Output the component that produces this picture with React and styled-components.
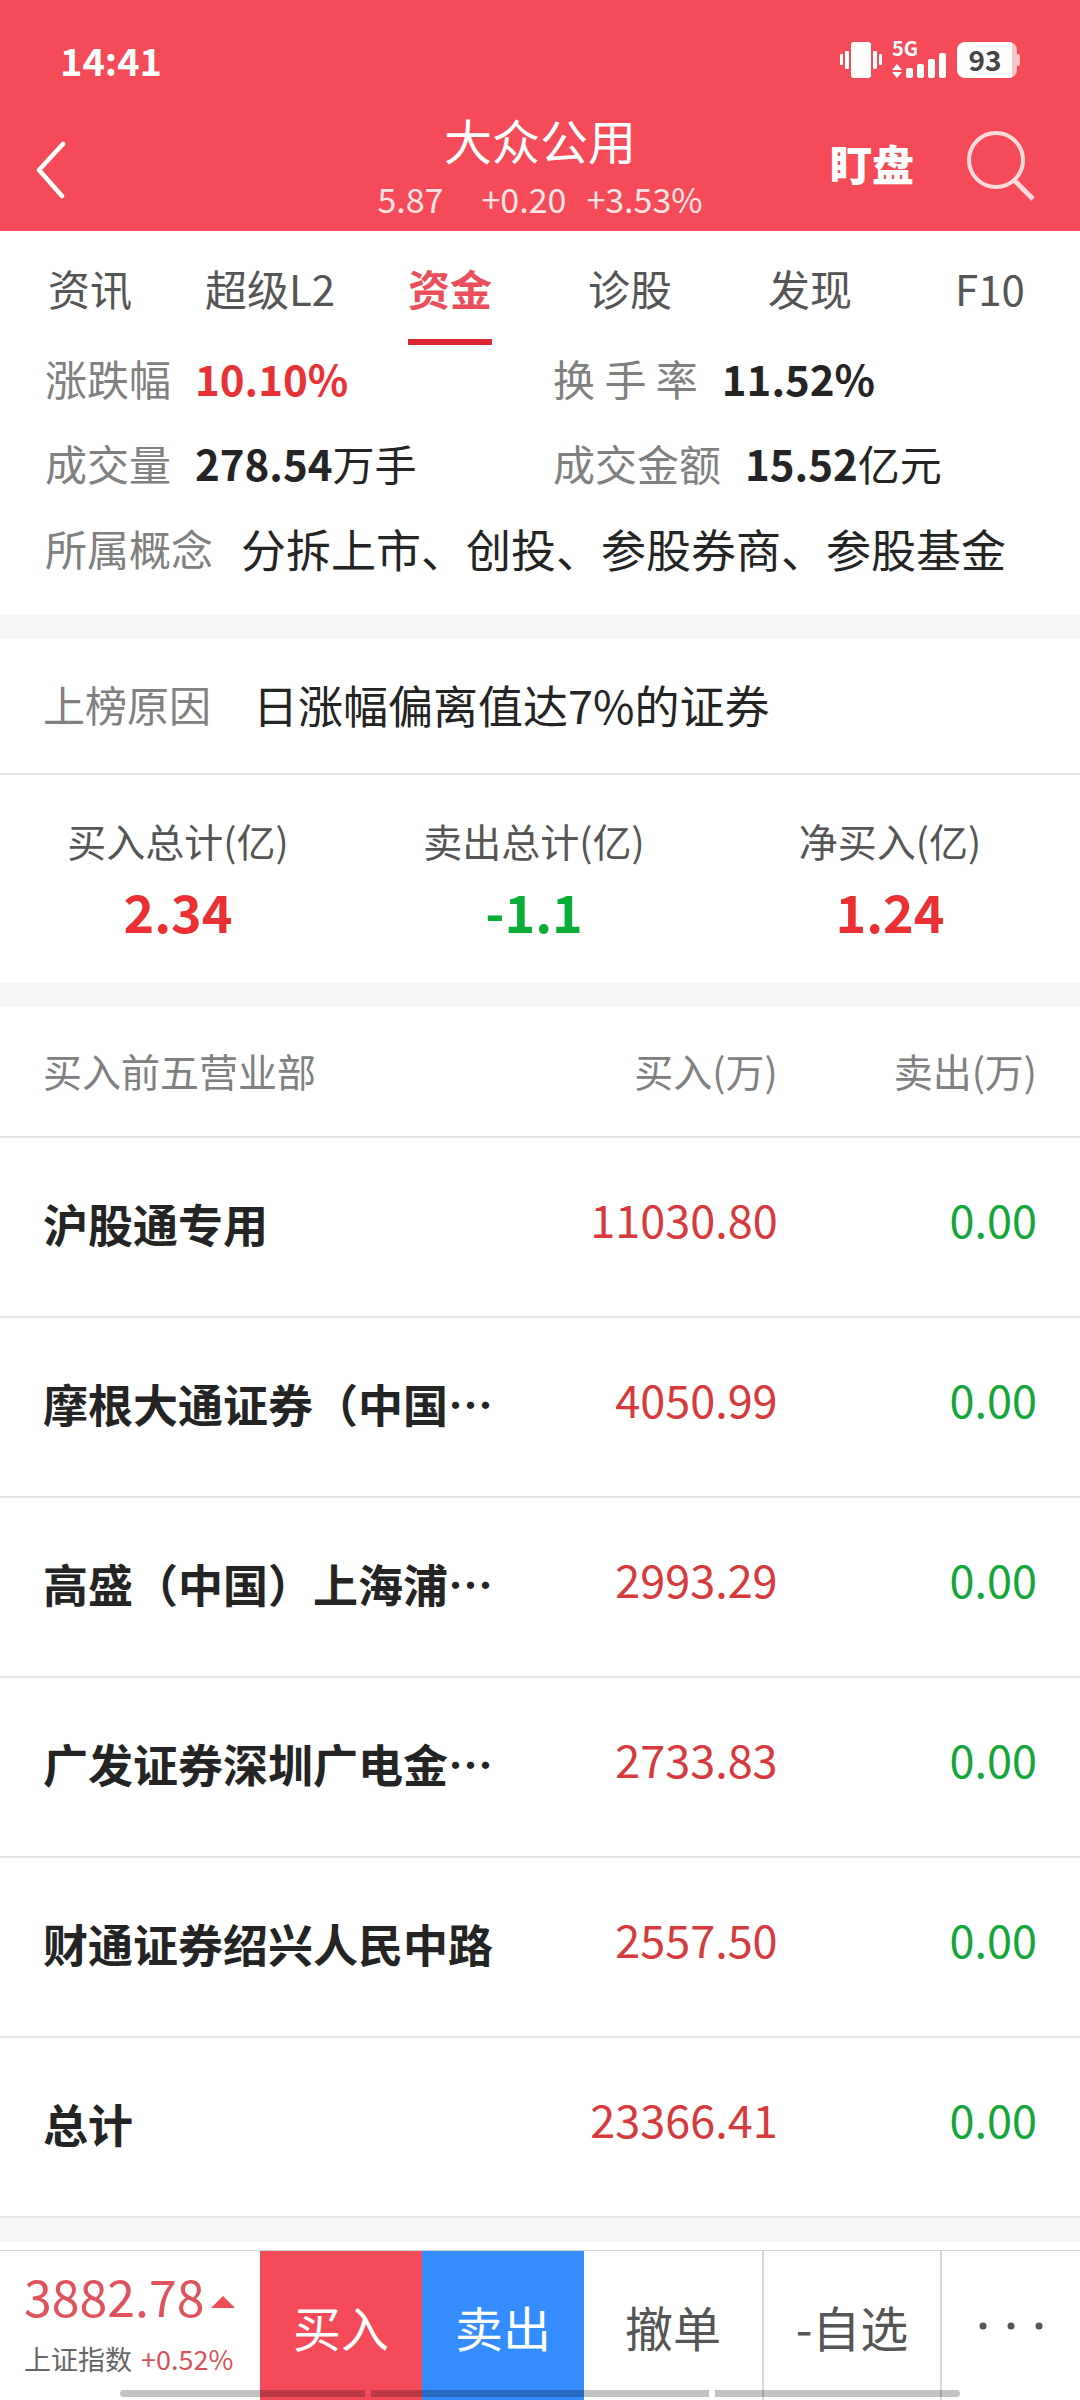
import React from 'react'
import styled, { createGlobalStyle } from 'styled-components'

const tabs = ['资讯', '超级L2', '资金', '诊股', '发现', 'F10']

const totals = [
  { label: '买入总计(亿)', value: '2.34' },
  { label: '卖出总计(亿)', value: '-1.1', down: true },
  { label: '净买入(亿)', value: '1.24' }
]

const seats = [
  { name: '沪股通专用', buy: '11030.80', sell: '0.00' },
  { name: '摩根大通证券（中国…', buy: '4050.99', sell: '0.00' },
  { name: '高盛（中国）上海浦…', buy: '2993.29', sell: '0.00' },
  { name: '广发证券深圳广电金…', buy: '2733.83', sell: '0.00' },
  { name: '财通证券绍兴人民中路', buy: '2557.50', sell: '0.00' },
  { name: '总计', buy: '23366.41', sell: '0.00' }
]

const VibrateIcon = () => (
  <svg width="42" height="36" viewBox="0 0 42 36" fill="#fff">
    <rect x="0" y="12" width="3" height="11" rx="1" />
    <rect x="5" y="9" width="4" height="18" rx="1" />
    <rect x="11" y="0" width="20" height="36" rx="3" />
    <rect x="33" y="9" width="4" height="18" rx="1" />
    <rect x="39" y="12" width="3" height="11" rx="1" />
  </svg>
)

const SignalIcon = () => (
  <svg width="55" height="36" viewBox="0 0 55 36" fill="#fff">
    <path d="M5 22L10 28H0zM0 30H10L5 36z" />
    <rect x="14" y="26" width="7" height="10" rx="2" />
    <rect x="25" y="22" width="7" height="14" rx="2" />
    <rect x="36" y="17" width="7" height="19" rx="2" />
    <rect x="47" y="11" width="7" height="25" rx="2" />
  </svg>
)

const BackIcon = () => (
  <svg width="30" height="58" viewBox="0 0 30 58" fill="none" stroke="#fff" strokeWidth="4.500" strokeLinecap="round" strokeLinejoin="round">
    <path d="M27 3L3 29L26 55" />
  </svg>
)

const SearchIcon = () => (
  <svg width="70" height="70" viewBox="0 0 70 70" fill="none" stroke="#ffdadd" strokeWidth="4">
    <circle cx="30" cy="29" r="27" />
    <path d="M48 49L67 68" strokeWidth="5" />
  </svg>
)

const App = () => (
  <Page>
    <GlobalStyle />
    <Header>
      <StatusBar>
        <Time>14:41</Time>
        <StatusIcons>
          <VibrateIcon />
          <Signal>
            <SignalIcon />
            <Network>5G</Network>
          </Signal>
          <Battery>93</Battery>
        </StatusIcons>
      </StatusBar>
      <TitleBar>
        <Back aria-label="返回"><BackIcon /></Back>
        <Heading>
          <Title>大众公用</Title>
          <Quote>
            <span>5.87</span>
            <Change>
              <span>+0.20</span>
              <span>+3.53%</span>
            </Change>
          </Quote>
        </Heading>
        <Actions>
          <Watch>盯盘</Watch>
          <button aria-label="搜索"><SearchIcon /></button>
        </Actions>
      </TitleBar>
    </Header>
    <Tabs>
      {
        tabs.map(tab => (
          <Tab key={tab} $active={tab === '资金'}>
            <TabText $active={tab === '资金'}>{tab}</TabText>
          </Tab>
        ))
      }
    </Tabs>
    <Facts>
      <Fact>
        <Label>涨跌幅</Label>
        <Value $color="#e73236"><b>10.10%</b></Value>
      </Fact>
      <Fact>
        <Label>换 手 率</Label>
        <Value><b>11.52%</b></Value>
      </Fact>
      <Fact>
        <Label>成交量</Label>
        <Value><b>278.54</b>万手</Value>
      </Fact>
      <Fact>
        <Label>成交金额</Label>
        <Value><b>15.52</b>亿元</Value>
      </Fact>
      <Fact $wide>
        <Label>所属概念</Label>
        <LongValue>分拆上市、创投、参股券商、参股基金</LongValue>
      </Fact>
    </Facts>
    <Band />
    <Reason>
      <Label>上榜原因</Label>
      <LongValue>日涨幅偏离值达7%的证券</LongValue>
    </Reason>
    <Totals>
      {
        totals.map(({ label, value, down }) => (
          <Total key={label}>
            <TotalLabel>{label}</TotalLabel>
            <TotalValue $down={down}>{value}</TotalValue>
          </Total>
        ))
      }
    </Totals>
    <Band />
    <Table>
      <thead>
        <tr>
          <Th>买入前五营业部</Th>
          <Th>买入(万)</Th>
          <Th>卖出(万)</Th>
        </tr>
      </thead>
      <tbody>
        {
          seats.map(({ name, buy, sell }) => (
            <tr key={name}>
              <Name>{name}</Name>
              <Amount>{buy}</Amount>
              <Amount $down>{sell}</Amount>
            </tr>
          ))
        }
      </tbody>
    </Table>
    <Band />
    <BottomBar>
      <Index>
        <Points>
          3882.78
          <Rise width="24" height="12" viewBox="0 0 24 12"><path d="M12 0L24 12H0z" /></Rise>
        </Points>
        <IndexRow>
          上证指数
          <IndexChange>+0.52%</IndexChange>
        </IndexRow>
      </Index>
      <Trade $color="#f54b58">买入</Trade>
      <Trade $color="#348cff">卖出</Trade>
      <Action>撤单</Action>
      <Action>-自选</Action>
      <More aria-label="更多">
        <svg width="64" height="8" viewBox="0 0 64 8" fill="#555">
          <circle cx="4" cy="4" r="3.500" />
          <circle cx="32" cy="4" r="3.500" />
          <circle cx="60" cy="4" r="3.500" />
        </svg>
      </More>
      <Gesture>
        <Pill $grow={245} $side="left" />
        <Pill $grow={338} />
        <Pill $grow={245} $side="right" />
      </Gesture>
    </BottomBar>
  </Page>
)

const GlobalStyle = createGlobalStyle`
  * {
    box-sizing: border-box;
  }
  body {
    margin: 0;
    background: #fff;
    color: #242424;
    font-family: "Noto Sans CJK SC", sans-serif;
  }
  button {
    border: 0;
    padding: 0;
    background: none;
    color: inherit;
    font: inherit;
  }
  svg {
    display: block;
  }
`

const Page = styled.main`
  display: flex;
  flex-direction: column;
  min-height: 100vh;
`

const Header = styled.header`
  background: #f54b58;
  color: #fff;
`

const StatusBar = styled.div`
  display: flex;
  justify-content: space-between;
  align-items: center;
  padding: 42px 63px 0 60px;
`

const Time = styled.span`
  font-size: 38px;
  line-height: 36px;
  font-weight: 700;
`

const StatusIcons = styled.div`
  display: flex;
  gap: 10px;
`

const Signal = styled.div`
  position: relative;
`

const Network = styled.span`
  position: absolute;
  top: 0;
  left: 0;
  font-size: 20px;
  line-height: 12px;
  font-weight: 700;
`

const Battery = styled.div`
  position: relative;
  width: 60px;
  border-radius: 8px;
  padding-right: 4px;
  background: linear-gradient(90deg, #fff 55px, #fbc3c7 55px);
  color: #444;
  font-size: 28px;
  line-height: 34px;
  font-weight: 700;
  text-align: center;
  &::after {
    content: '';
    position: absolute;
    top: 12px;
    right: -3px;
    width: 3px;
    height: 12px;
    border-radius: 0 2px 2px 0;
    background: #fbc3c7;
  }
`

const TitleBar = styled.div`
  display: grid;
  grid-template-columns: 1fr auto 1fr;
  align-items: center;
  padding: 28px 36px 5px;
`

const Back = styled.button`
  justify-self: start;
  padding-top: 8px;
`

const Heading = styled.div`
  text-align: center;
`

const Title = styled.h1`
  margin: 0;
  font-size: 48px;
  line-height: 66px;
  font-weight: 400;
`

const Quote = styled.div`
  display: flex;
  gap: 38px;
  color: #ffe4e6;
  font-size: 34px;
  line-height: 54px;
`

const Change = styled.span`
  display: flex;
  gap: 20px;
`

const Actions = styled.div`
  display: flex;
  justify-content: flex-end;
  align-items: center;
  gap: 52px;
  padding-right: 8px;
`

const Watch = styled.button`
  padding-bottom: 6px;
  font-size: 42px;
  line-height: 64px;
  font-weight: 900;
`

const Tabs = styled.nav`
  display: grid;
  grid-template-columns: repeat(6, 1fr);
`

const Tab = styled.button`
  display: flex;
  justify-content: center;
  color: ${({ $active }) => $active ? '#e9505b' : '#555'};
  font-size: 42px;
  font-weight: ${({ $active }) => $active ? 700 : 400};
`

const TabText = styled.span`
  padding-top: 6px;
  border-bottom: 6px solid ${({ $active }) => $active ? '#dc2730' : 'transparent'};
  line-height: 102px;
`

const Facts = styled.section`
  display: grid;
  grid-template-columns: 508fr 482fr;
  row-gap: 17px;
  padding: 0 45px 32px;
`

const Fact = styled.div`
  display: flex;
  align-items: center;
  gap: 24px;
  line-height: 68px;
  ${({ $wide }) => $wide && 'grid-column: 1 / -1; gap: 28px;'}
`

const Label = styled.span`
  padding-bottom: 2px;
  color: #808080;
  font-size: 42px;
  line-height: 66px;
`

const Value = styled.span`
  padding-bottom: 2px;
  color: ${({ $color }) => $color || '#242424'};
  font-size: 42px;
  line-height: 66px;
`

const LongValue = styled.span`
  font-size: 45px;
`

const Band = styled.div`
  height: 24px;
  background: #f6f6f6;
`

const Reason = styled.section`
  display: flex;
  align-items: center;
  gap: 42px;
  padding: 31px 43px 33px;
  border-bottom: 2px solid #e4e4e4;
  line-height: 70px;
`

const Totals = styled.section`
  display: grid;
  grid-template-columns: repeat(3, 1fr);
  padding: 32px 12px 34px 0;
`

const Total = styled.div`
  text-align: center;
`

const TotalLabel = styled.div`
  color: #555;
  font-size: 39px;
  line-height: 66px;
`

const TotalValue = styled.div`
  color: ${({ $down }) => $down ? '#0aae36' : '#eb3033'};
  font-size: 52px;
  line-height: 76px;
  font-weight: 700;
`

const Table = styled.table`
  width: 100%;
  border-spacing: 0;
  table-layout: fixed;
  & tr > * {
    padding: 0 0 8px 43px;
    border-bottom: 2px solid #e4e4e4;
    text-align: left;
    white-space: nowrap;
  }
  & tr > :nth-child(2) {
    width: 24%;
    padding: 0 0 18px;
    text-align: right;
  }
  & tr > :nth-child(3) {
    width: 28%;
    padding: 0 43px 18px 0;
    text-align: right;
  }
  & thead tr > :nth-child(n) {
    padding-bottom: 3px;
  }
`

const Th = styled.th`
  height: 131px;
  color: #808080;
  font-size: 39px;
  font-weight: 400;
`

const Name = styled.td`
  height: 180px;
  font-size: 45px;
  font-weight: 700;
`

const Amount = styled.td`
  height: 180px;
  color: ${({ $down }) => $down ? '#14a53c' : '#d63a3d'};
  font-size: 45px;
`

const BottomBar = styled.footer`
  position: relative;
  display: grid;
  grid-template-columns: 260fr 162fr 162fr 180fr 178fr 138fr;
  min-height: 150px;
  margin-top: auto;
  border-top: 1px solid #d4d4d4;
  font-size: 48px;
`

const Index = styled.div`
  padding: 14px 0 0 24px;
  white-space: nowrap;
`

const Points = styled.div`
  display: flex;
  align-items: center;
  gap: 7px;
  color: #e0525c;
  font-size: 50px;
  line-height: 60px;
`

const Rise = styled.svg`
  margin-top: 14px;
  fill: #ee4c57;
`

const IndexRow = styled.div`
  display: flex;
  gap: 9px;
  color: #666;
  font-size: 27px;
  line-height: 68px;
`

const IndexChange = styled.span`
  color: #d6535b;
`

const Trade = styled.button`
  background: ${({ $color }) => $color};
  color: #fff;
`

const Action = styled.button`
  border-right: 2px solid #d8d8d8;
  color: #555;
`

const More = styled.button`
  display: flex;
  justify-content: center;
  align-items: center;
`

const Gesture = styled.div`
  position: absolute;
  bottom: 3px;
  left: 120px;
  right: 120px;
  display: flex;
  gap: 6px;
  pointer-events: none;
`

const Pill = styled.div`
  flex: ${({ $grow }) => $grow} 1 0;
  height: 7px;
  border-radius: ${({ $side }) => $side === 'left' ? '4px 0 0 4px' : $side === 'right' ? '0 4px 4px 0' : 0};
  background: rgba(0, 0, 0, 0.24);
`

export default App
